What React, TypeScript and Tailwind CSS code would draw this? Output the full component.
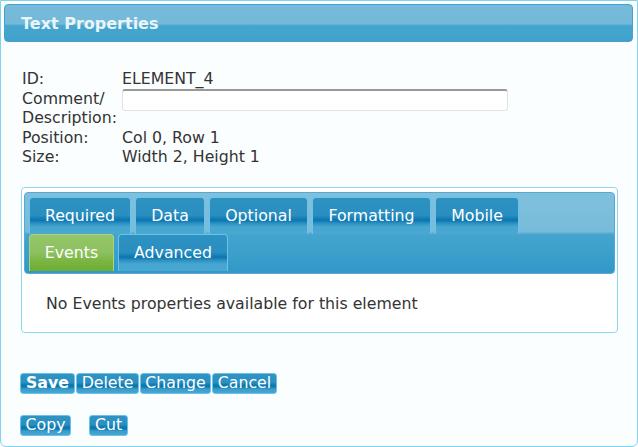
import React from 'react';

const tabBg =
    'bg-[linear-gradient(to_bottom,#2d91c2_0%,#2a8ec0_48%,#1680b8_56%,#0b76ae_62%,#2a8fc2_70%,#46a6d0_80%,#4aa8d1_100%)]';
const btnBg =
    'bg-[linear-gradient(to_bottom,#2f93c3_0%,#2b8fc1_45%,#137db6_55%,#0a74ad_65%,#3a9dcb_80%,#49a7d1_100%)]';

const font = { fontFamily: '"DejaVu Sans", Verdana, sans-serif' };

interface TabProps {
    label: string;
    width: string;
    active?: boolean;
}

const Tab: React.FC<TabProps> = ({ label, width, active }) => (
    <div
        className={`${width} h-[37px] flex items-center justify-center rounded-t-[4px] border border-b-0 text-[15.75px] text-white ${
            active
                ? 'border-[#a9d47c] bg-[linear-gradient(to_bottom,#95c66a_0%,#8cc05e_50%,#79b43f_75%,#6fad34_100%)]'
                : `border-[#6cc3ea] ${tabBg}`
        }`}
    >
        {label}
    </div>
);

interface ButtonProps {
    label: string;
    width: string;
    bold?: boolean;
}

const Button: React.FC<ButtonProps> = ({ label, width, bold }) => (
    <button
        className={`${width} h-[21px] flex items-center justify-center rounded-[3px] border border-[#6cc3ea] ${btnBg} text-[15.75px] leading-none text-white ${
            bold ? 'font-bold' : ''
        }`}
        style={font}
    >
        {label}
    </button>
);

const App: React.FC = () => {
    return (
        <div
            className="w-[638px] h-[447px] border border-[#7fd3f2] rounded-b-[6px] bg-[#fbfefe] pl-[3px] pr-[4px] pt-[3px] text-[#333] overflow-hidden"
            style={font}
        >
            {/* header */}
            <div className="h-[38px] rounded-[4px] border border-[#4a9fd0] bg-[linear-gradient(to_bottom,#77bbda_0%,#74b9d8_52%,#45a5ce_58%,#40a2cc_100%)] flex items-center pl-[16px] pt-[2px]">
                <span className="text-[16px] font-bold text-[#eaf5fa]">Text Properties</span>
            </div>

            <div className="pl-[17px] pt-[27px]">
                {/* info table */}
                <div className="grid grid-cols-[100px_1fr] text-[15.75px] leading-[19.5px] pl-[1px]">
                    <div>ID:</div>
                    <div>ELEMENT_4</div>
                    <div>
                        Comment/
                        <br />
                        Description:
                    </div>
                    <div>
                        <input
                            type="text"
                            className="w-[386px] h-[22px] rounded-[3px] border border-[#e2e2e2] border-t-2 border-t-[#999] bg-white outline-none"
                        />
                    </div>
                    <div>Position:</div>
                    <div>Col 0, Row 1</div>
                    <div>Size:</div>
                    <div>Width 2, Height 1</div>
                </div>

                {/* tabs box */}
                <div className="mt-[20px] w-[597px] h-[146px] rounded-[4px] border border-[#8cd6f2] bg-white pl-[2px] pr-[2px] pt-[4px]">
                    <div className="h-[82px] rounded-[4px] border border-[#5aa7d4] bg-[linear-gradient(to_bottom,#7fc0dd_0%,#78bcda_48%,#44a4ce_52%,#3a9ecb_80%,#3198c7_100%)] pl-[4px] pt-[4px]">
                        <div className="flex gap-[4px]">
                            <Tab label="Required" width="w-[102px]" />
                            <Tab label="Data" width="w-[70px]" />
                            <Tab label="Optional" width="w-[99px]" />
                            <Tab label="Formatting" width="w-[119px]" />
                            <Tab label="Mobile" width="w-[84px]" />
                        </div>
                        <div className="flex gap-[4px]">
                            <Tab label="Events" width="w-[85px]" active />
                            <Tab label="Advanced" width="w-[110px]" />
                        </div>
                    </div>
                    <div className="pl-[22px] pt-[20px] text-[15.75px] leading-[19.5px]">
                        No Events properties available for this element
                    </div>
                </div>

                {/* buttons */}
                <div className="-ml-[1px] mt-[40px] flex gap-[1px]">
                    <Button label="Save" width="w-[55px]" bold />
                    <Button label="Delete" width="w-[63px]" />
                    <Button label="Change" width="w-[71px]" />
                    <Button label="Cancel" width="w-[65px]" />
                </div>
                <div className="-ml-[1px] mt-[21px] flex gap-[18px]">
                    <Button label="Copy" width="w-[51px]" />
                    <Button label="Cut" width="w-[39px]" />
                </div>
            </div>
        </div>
    );
};

export default App;
